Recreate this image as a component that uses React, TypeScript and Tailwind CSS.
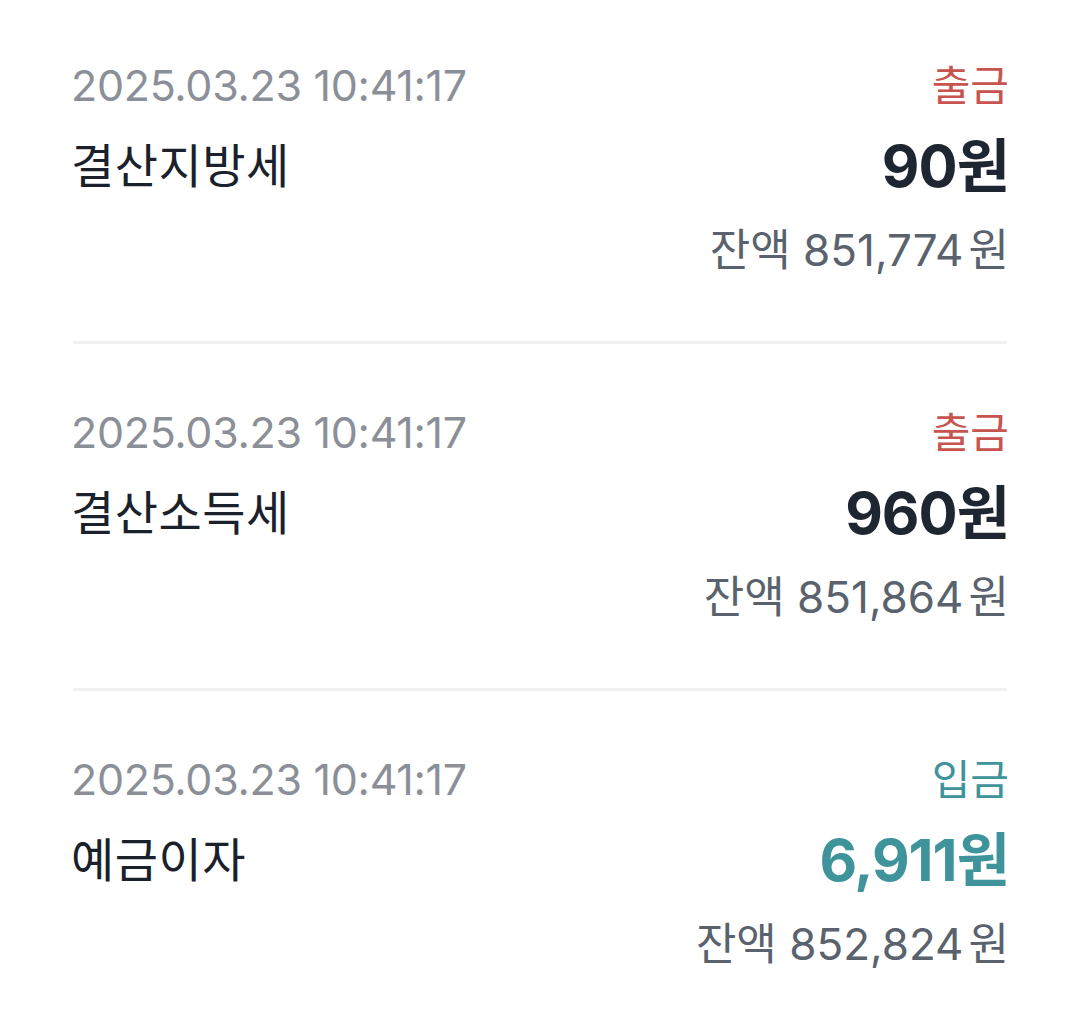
const rows = [
  { date: "2025.03.23 10:41:17", title: "결산지방세", type: "출금", amount: "90원", balance: "851,774" },
  { date: "2025.03.23 10:41:17", title: "결산소득세", type: "출금", amount: "960원", balance: "851,864" },
  { date: "2025.03.23 10:41:17", title: "예금이자", type: "입금", amount: "6,911원", balance: "852,824" },
];

type Row = (typeof rows)[number];

function HistoryItem({ row, first }: { row: Row; first: boolean }) {
  const deposit = row.type === "입금";
  return (
    <div className={`flex justify-between ${first ? "pt-[57px]" : "pt-[60px]"} pb-[63px]`}>
      <div className="flex flex-col -ml-[2px]">
        <div className="h-[56px] flex items-center text-[43px] text-[#8b9098] tracking-[-0.3px]">{row.date}</div>
        <div className="mt-[21px] h-[64px] flex items-center text-[47px] text-[#1a212b] tracking-[0.5px]">
          {row.title}
        </div>
      </div>
      <div className="flex flex-col items-end -mr-[2px]">
        <div className={`h-[56px] flex items-center text-[42px] ${deposit ? "text-[#3f949c]" : "text-[#c8544f]"}`}>
          {row.type}
        </div>
        <div
          className={`mt-[21px] h-[64px] flex items-center text-[58px] font-bold tracking-[-1px] ${
            deposit ? "text-[#3f949c]" : "text-[#1e2631]"
          }`}
        >
          {row.amount}
        </div>
        <div className="mt-[24px] h-[56px] flex items-center text-[44px] text-[#59626d]">
          잔액 {row.balance}
          <span className="ml-[5px]">원</span>
        </div>
      </div>
    </div>
  );
}

export default function App() {
  return (
    <div
      className="w-[1080px] h-[1033px] bg-white px-[73px] overflow-hidden"
      style={{ fontFamily: '"Inter", "Noto Sans CJK KR", sans-serif' }}
    >
      {rows.map((row, i) => (
        <div key={i}>
          {i > 0 && <div className="h-[3px] bg-[#f0f1f2]" />}
          <HistoryItem row={row} first={i === 0} />
        </div>
      ))}
    </div>
  );
}
